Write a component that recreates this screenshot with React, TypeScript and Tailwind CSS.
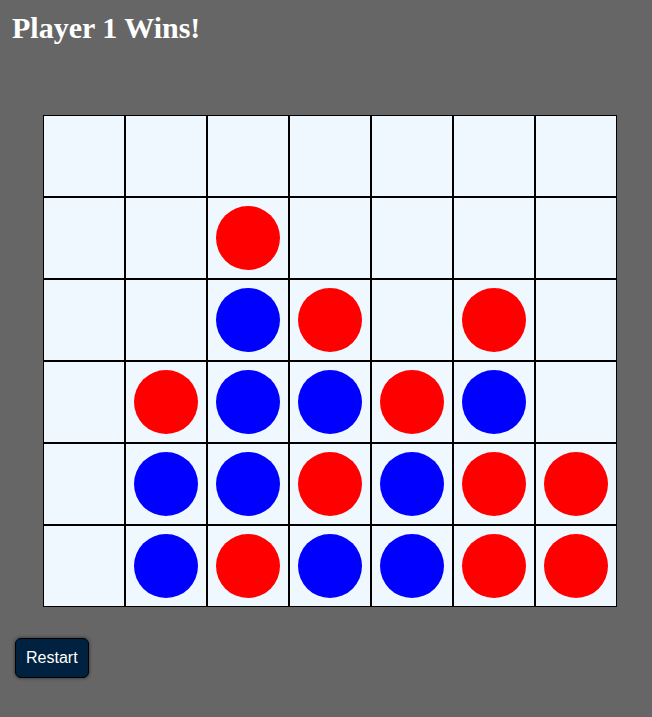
import React from "react";

type Cell = "" | "R" | "B";

const board: Cell[][] = [
  ["", "", "", "", "", "", ""],
  ["", "", "R", "", "", "", ""],
  ["", "", "B", "R", "", "R", ""],
  ["", "R", "B", "B", "R", "B", ""],
  ["", "B", "B", "R", "B", "R", "R"],
  ["", "B", "R", "B", "B", "R", "R"],
];

export default function App() {
  return (
    <div className="min-h-[717px] w-full bg-[#666666] px-3 pt-[11px]">
      <h1 className="font-['Liberation_Serif',serif] text-[30px] font-bold leading-[34px] text-white">Player 1 Wins!</h1>

      <div className="ml-[31px] mt-[70px] grid w-fit grid-cols-7">
        {board.flat().map((cell, i) => (
          <div key={i} className="flex h-[82px] w-[82px] items-center justify-center border border-black bg-[#f0f8ff]">
            {cell === "R" && <div className="h-16 w-16 rounded-full bg-[#ff0000]" />}
            {cell === "B" && <div className="h-16 w-16 rounded-full bg-[#0000ff]" />}
          </div>
        ))}
      </div>

      <button className="ml-[3px] mt-[31px] block h-[40px] rounded-md border border-black bg-[#002240] px-[10px] font-['Liberation_Sans',sans-serif] text-base text-white shadow-[0_0_3px_1px_rgba(0,0,0,0.35)]">
        Restart
      </button>
    </div>
  );
}
